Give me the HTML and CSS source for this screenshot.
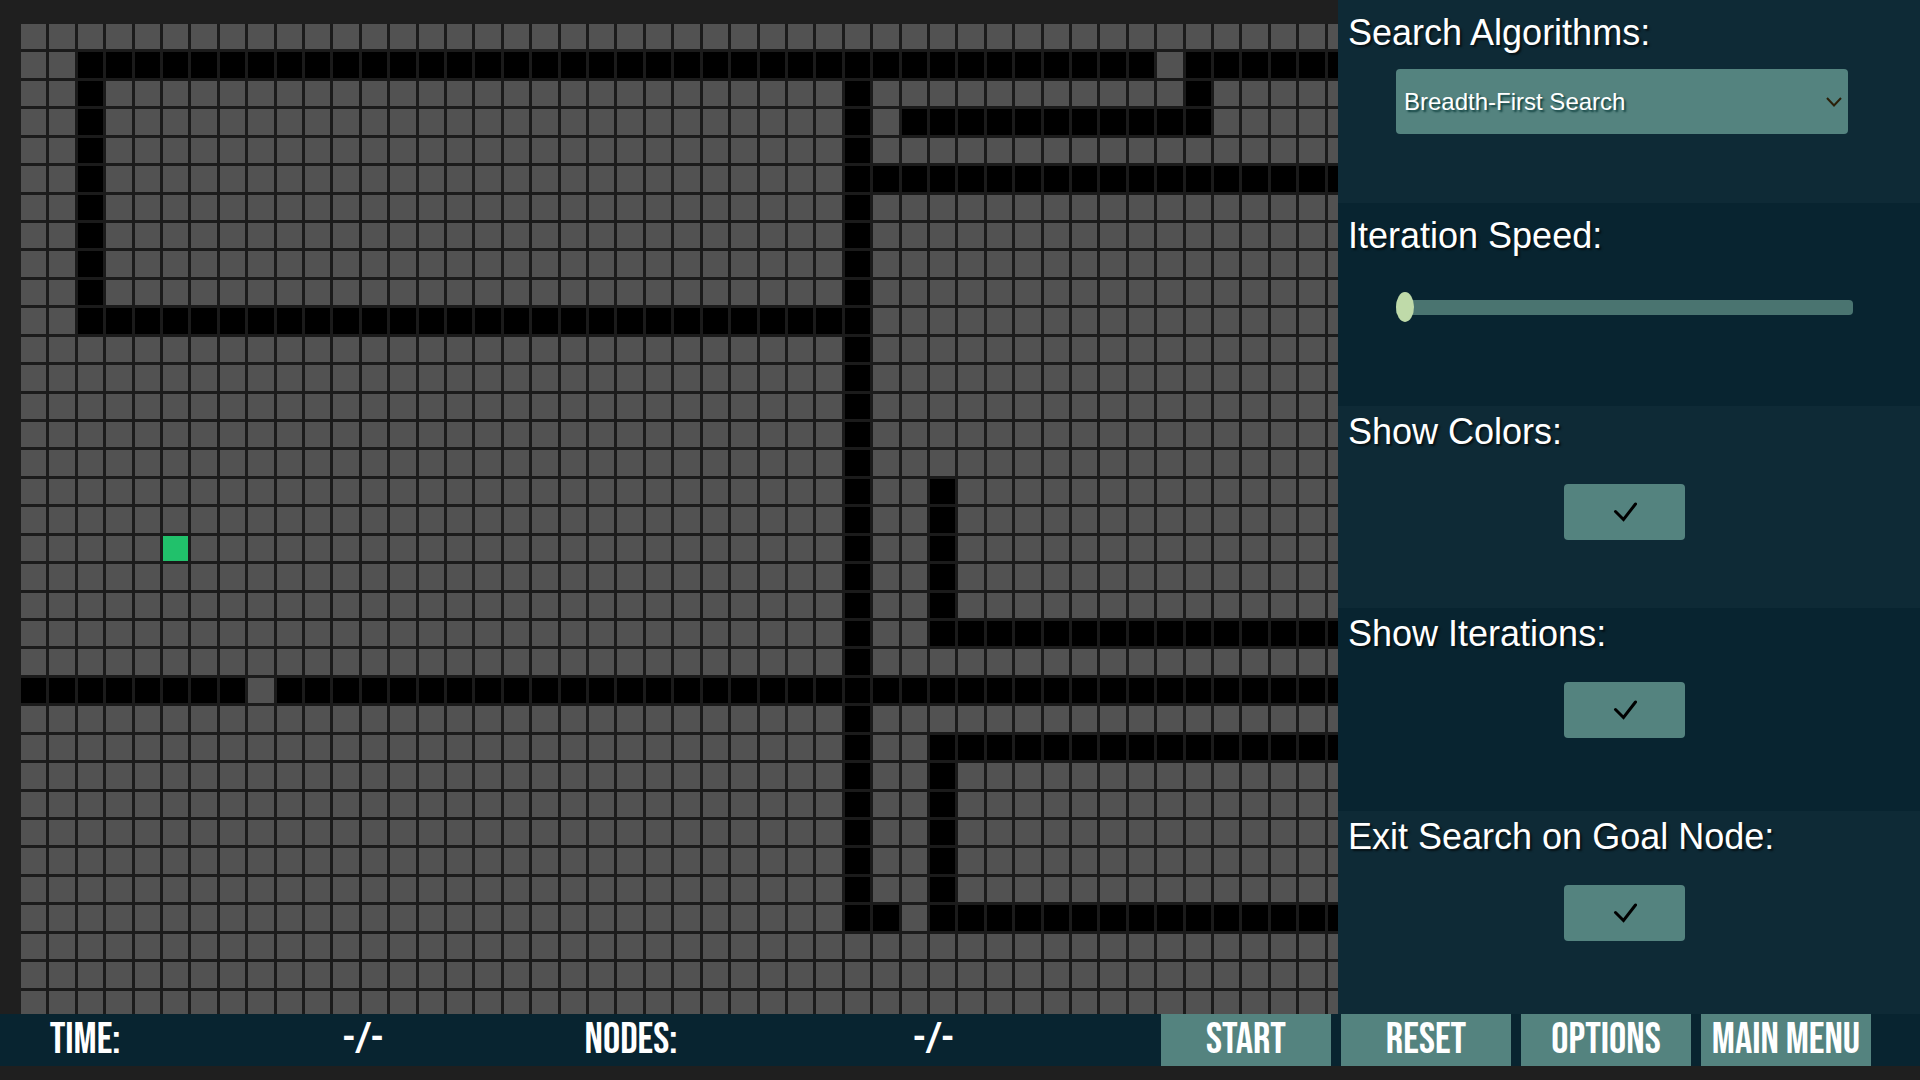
FILE: index.html
```html
<!DOCTYPE html>
<html lang="en">
<head>
<meta charset="utf-8">
<meta name="viewport" content="width=device-width, initial-scale=1">
<title>Search Algorithms</title>
<link rel="stylesheet" href="styles.css">
</head>
<body>
<div class="app">
  <main class="workspace">
    <section class="board-area">
      <div class="board" id="board"></div>
    </section>
    <aside class="settings">
      <div class="setting">
        <label class="setting-label setting-label-low" for="algorithm">Search Algorithms:</label>
        <div class="select-box">
          <select class="select" id="algorithm">
            <option>Breadth-First Search</option>
            <option>Depth-First Search</option>
          </select>
          <svg class="chevron" viewBox="0 0 16 10" aria-hidden="true"><path d="M1 1 8 8.5 15 1"/></svg>
        </div>
      </div>
      <div class="setting">
        <label class="setting-label setting-label-low" for="speed">Iteration Speed:</label>
        <input class="slider" id="speed" type="range" min="0" max="100" value="0">
      </div>
      <div class="setting">
        <label class="setting-label" for="colors">Show Colors:</label>
        <div class="toggle toggle-low">
          <input class="toggle-input" id="colors" type="checkbox" checked>
          <svg class="tick" viewBox="0 0 24 20" aria-hidden="true"><path d="M2.5 9.5 10.5 17.5 22.5 2"/></svg>
        </div>
      </div>
      <div class="setting">
        <label class="setting-label" for="iterations">Show Iterations:</label>
        <div class="toggle">
          <input class="toggle-input" id="iterations" type="checkbox" checked>
          <svg class="tick" viewBox="0 0 24 20" aria-hidden="true"><path d="M2.5 9.5 10.5 17.5 22.5 2"/></svg>
        </div>
      </div>
      <div class="setting">
        <label class="setting-label" for="exit">Exit Search on Goal Node:</label>
        <div class="toggle">
          <input class="toggle-input" id="exit" type="checkbox" checked>
          <svg class="tick" viewBox="0 0 24 20" aria-hidden="true"><path d="M2.5 9.5 10.5 17.5 22.5 2"/></svg>
        </div>
      </div>
    </aside>
  </main>
  <footer class="bar">
    <div class="stats">
      <span>TIME:</span>
      <span>-/-</span>
      <span>NODES:</span>
      <span>-/-</span>
    </div>
    <div class="actions">
      <button class="action" type="button">START</button>
      <button class="action" type="button">RESET</button>
      <button class="action" type="button">OPTIONS</button>
      <button class="action" type="button">MAIN MENU</button>
    </div>
  </footer>
</div>
<script src="board.js"></script>
</body>
</html>
```

FILE: styles.css
```css
* {
  box-sizing: border-box;
}

body {
  margin: 0;
  background: #1f1f1f;
  color: #fff;
  font-family: "Liberation Sans", Arial, sans-serif;
}

.app {
  display: flex;
  flex-direction: column;
  min-height: 100vh;
  padding-bottom: 14px;
}

.workspace {
  flex: 1;
  display: grid;
  grid-template-columns: minmax(0, 223fr) minmax(0, 97fr);
}

/* The maze runs past the right and bottom edges of its area and is clipped. */
.board-area {
  display: flex;
  overflow: hidden;
  padding: 24px 0 0 21px;
}

.board {
  flex: 1;
  display: grid;
  grid-template-columns: repeat(47, minmax(0, 1fr));
  grid-template-rows: repeat(35, minmax(0, 1fr));
  gap: 3px;
  margin: 0 -15px -2px 0;
  background: #1b1b1b;
}

.cell {
  background: #525252;
}

.cell-wall {
  background: #000;
}

.cell-start {
  background: #21c16b;
}

.settings {
  display: grid;
  grid-template-rows: repeat(5, minmax(0, 1fr));
}

.setting {
  display: flex;
  flex-direction: column;
  padding: 5px 10px;
  background: #0e2a36;
}

.setting:nth-child(even) {
  background: #082430;
}

.setting-label {
  font-size: 36px;
  line-height: 42px;
  text-shadow: 2px 2px 2px rgba(0, 0, 0, 0.6);
}

.setting-label-low {
  padding-top: 7px;
}

.select-box {
  position: relative;
  margin: 15px 62px 0 48px;
}

.select {
  display: block;
  width: 100%;
  height: 65px;
  padding: 0 32px 0 8px;
  border: 0;
  border-radius: 4px;
  background: #54837f;
  appearance: none;
  color: #fff;
  font: 24px "Liberation Sans", Arial, sans-serif;
  text-shadow: 2px 2px 2px rgba(0, 50, 50, 0.8);
}

.chevron {
  position: absolute;
  top: 28px;
  right: 6px;
  width: 16px;
  height: 10px;
  fill: none;
  stroke: #2b1f08;
  stroke-width: 2;
  pointer-events: none;
}

.slider {
  height: 30px;
  margin: 36px 57px 0 48px;
  appearance: none;
  background: transparent;
}

.slider::-webkit-slider-runnable-track {
  height: 15px;
  border-radius: 4px;
  background: #4a7470;
}

.slider::-webkit-slider-thumb {
  width: 18px;
  height: 30px;
  margin-top: -8px;
  border-radius: 50%;
  background: #bfdaa9;
  appearance: none;
}

.toggle {
  position: relative;
  align-self: center;
  margin: 27px 10px 0 0;
}

.toggle-low {
  margin-top: 31px;
}

.toggle-input {
  display: block;
  width: 121px;
  height: 56px;
  margin: 0;
  border-radius: 4px;
  background: #54837f;
  appearance: none;
}

.tick {
  position: absolute;
  top: 18px;
  left: 49px;
  width: 24px;
  height: 20px;
  fill: none;
  stroke: #000;
  stroke-width: 3;
  stroke-linecap: round;
  pointer-events: none;
}

.toggle-input:not(:checked) + .tick {
  visibility: hidden;
}

.bar {
  display: flex;
  height: 52px;
  padding-right: 49px;
  background: #082430;
  font-family: "Bebas Neue", "Liberation Sans Narrow", "Liberation Sans", sans-serif;
  font-size: 43px;
  font-weight: 400;
  line-height: 52px;
}

.stats {
  flex: 1;
  display: grid;
  grid-template-columns: 170fr 386fr 150fr 455fr;
  text-align: center;
}

.actions {
  display: flex;
  gap: 10px;
}

.action {
  width: 170px;
  padding: 0;
  border: 0;
  background: #54837f;
  color: #fff;
  font: inherit;
  white-space: nowrap;
}
```

FILE: board.js
```js
const COLUMNS = 47;
const ROWS = 35;
const START = [18, 5];

// Wall runs: first row, last row, first column, last column.
const WALLS = [
  [1, 1, 2, 39],
  [1, 1, 41, 46],
  [2, 9, 2, 2],
  [2, 3, 41, 41],
  [3, 3, 31, 40],
  [5, 5, 29, 46],
  [10, 10, 2, 29],
  [2, 31, 29, 29],
  [16, 21, 32, 32],
  [21, 21, 32, 46],
  [23, 23, 0, 7],
  [23, 23, 9, 46],
  [25, 25, 32, 46],
  [26, 31, 32, 32],
  [31, 31, 30, 30],
  [31, 31, 32, 46]
];

const isWall = (row, column) =>
  WALLS.some(([top, bottom, left, right]) =>
    row >= top && row <= bottom && column >= left && column <= right);

const board = document.getElementById("board");

for (let row = 0; row < ROWS; row++) {
  for (let column = 0; column < COLUMNS; column++) {
    const cell = document.createElement("div");
    cell.className = "cell";
    if (row === START[0] && column === START[1]) cell.classList.add("cell-start");
    else if (isWall(row, column)) cell.classList.add("cell-wall");
    board.append(cell);
  }
}
```
